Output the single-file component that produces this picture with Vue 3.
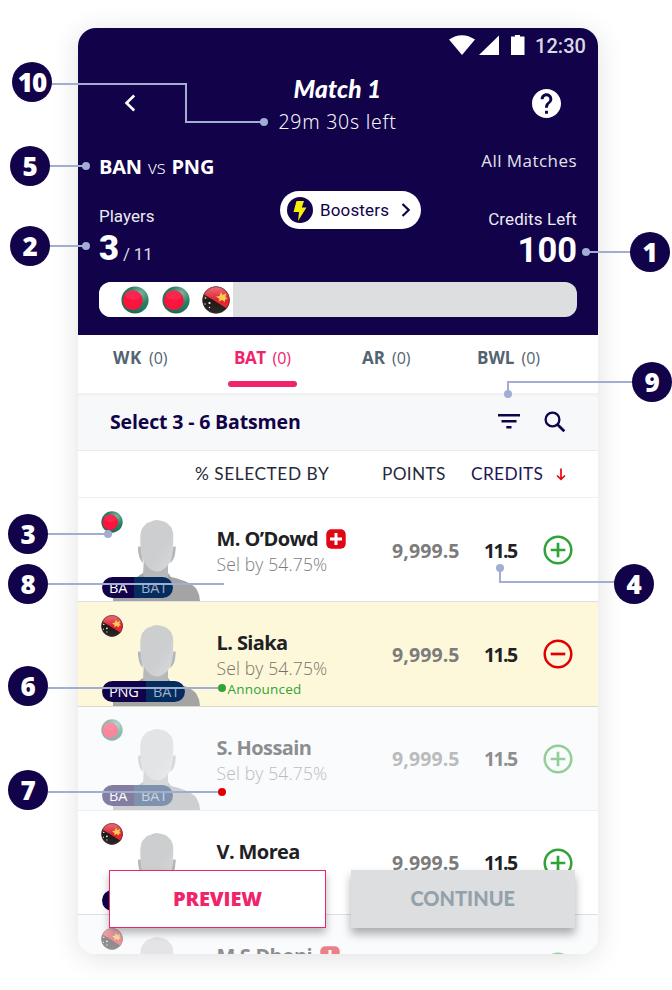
<script setup>
const tabs = [
  { key: 'wk', label: 'WK' },
  { key: 'bat', label: 'BAT', active: true },
  { key: 'ar', label: 'AR' },
  { key: 'bwl', label: 'BWL' },
]

// Rows that slide under the footer carry only the parts that stay visible.
const players = [
  { id: 'od', name: 'M. O’Dowd', team: 'BA', flag: 'ban', injured: true, action: 'plus', sel: true, tag: true, role: 'BAT' },
  { id: 'si', name: 'L. Siaka', team: 'PNG', flag: 'png', action: 'minus', selected: true, announced: true, sel: true, tag: true, role: 'BAT' },
  { id: 'ho', name: 'S. Hossain', team: 'BA', flag: 'ban', action: 'plus', faded: true, sel: true, tag: true, role: 'BAT' },
  { id: 'mo', name: 'V. Morea', team: '', flag: 'png', action: 'plus', tag: true, role: '', sel: false },
  { id: 'dh', name: 'M.S.Dhoni', team: '', flag: 'png', injured: true, action: 'plus', faded: true, last: true },
]

const badges = ['10', '5', '2', '3', '8', '6', '7', '1', '9', '4']
</script>

<template>
  <div class="page">
    <svg class="defs" width="0" height="0">
      <defs>
        <radialGradient id="green" cx=".7" cy=".25" r=".85">
          <stop offset="0" stop-color="#7db59f" />
          <stop offset=".45" stop-color="#2b7f63" />
          <stop offset="1" stop-color="#1f6650" />
        </radialGradient>
        <radialGradient id="red" cx=".5" cy=".5" r=".55">
          <stop offset="0" stop-color="#ff1440" />
          <stop offset="1" stop-color="#f6143c" />
        </radialGradient>
        <linearGradient id="gloss" x1="0" y1="0" x2="0" y2="1">
          <stop offset="0" stop-color="#fff" stop-opacity=".38" />
          <stop offset=".5" stop-color="#fff" stop-opacity=".03" />
          <stop offset="1" stop-color="#fff" stop-opacity=".1" />
        </linearGradient>
        <clipPath id="round"><circle cx="14" cy="14" r="13.6" /></clipPath>
        <linearGradient id="head" x1="0" y1="0" x2="1" y2="1">
          <stop offset=".6" stop-color="#cdcecf" />
          <stop offset="1" stop-color="#d9dadb" />
        </linearGradient>
        <symbol id="ban" viewBox="0 0 28 28">
          <circle cx="14" cy="14" r="13.6" fill="url(#green)" />
          <circle cx="11.8" cy="14.2" r="9.9" fill="url(#red)" />
          <ellipse cx="12" cy="9" rx="8" ry="5" fill="#fff" opacity=".08" />
        </symbol>
        <symbol id="png" viewBox="0 0 28 28">
          <g clip-path="url(#round)">
            <rect width="28" height="28" fill="#17110f" />
            <path d="M0 7V0H28V24.500Z" fill="#e01c2c" />
            <path d="M14 10.500l3.500-.5 1.500-4 1.500 3 3.500-1.500-.5 3.500 2 2-2.500.5v2.500l-3-2-3.500 1.500 1-2.500z" fill="#f6c63a" />
            <g fill="#fff">
              <circle cx="3.500" cy="12" r=".8" /><circle cx="7.500" cy="17" r="1.100" />
              <circle cx="3" cy="18" r=".7" /><circle cx="7.500" cy="21.500" r=".7" />
            </g>
            <rect width="28" height="28" fill="url(#gloss)" />
          </g>
          <circle cx="14" cy="14" r="13.2" fill="none" stroke="#4b3030" stroke-opacity=".5" />
        </symbol>
        <symbol id="person" viewBox="0 0 88 81">
          <path d="M0 81V66Q10 60 24 57L30 53H55L58 57Q80 62 84 70Q87 75 87 81Z" fill="#a4a4a5" />
          <path d="M31 36H55V58Q51 66 44 66T30 55Z" fill="#b6b8ba" />
          <path d="M28 27Q24.500 24.500 25 30Q26 40 30 43ZM60 27Q63.500 24.500 62.500 30Q62 40 57 43Z" fill="#b4b8bb" />
          <path d="M27.300 22Q26.500 9 32 5L34 3L37 2L40 .7L43 0L47 .5L51 1.500L54 3L57 6Q61 9 60.200 22L59.300 34Q58 44 51 49Q44 54 37 49Q30 43 28 34Z" fill="url(#head)" />
        </symbol>
      </defs>
    </svg>

    <main class="phone">
      <header class="header">
        <div class="status">
          <svg width="76" height="20" viewBox="0 0 76 20" fill="#fff">
            <path d="M0 4.500Q13-4 26 4.500L13 20Z" />
            <path d="M50 .5V20H30Z" />
            <path d="M62 1.500h4V0h5v1.500h4.500V20H62Z" />
          </svg>
          <span class="clock">12:30</span>
        </div>

        <div class="title-row">
          <svg class="back" width="12" height="18" viewBox="0 0 12 18">
            <path d="M10.200 1.500L2.500 9l7.700 7.500" fill="none" stroke="#fff" stroke-width="2.600" />
          </svg>
          <div class="titles">
            <h1>Match 1</h1>
            <p>29m 30s left</p>
          </div>
          <svg class="help" width="29" height="29" viewBox="2 2 20 20" fill="#fff">
            <path d="M12 2C6.480 2 2 6.480 2 12s4.480 10 10 10 10-4.480 10-10S17.520 2 12 2zm1 17h-2v-2h2v2zm2.070-7.750l-.9.920C13.450 12.900 13 13.500 13 15h-2v-.5c0-1.100.45-2.100 1.170-2.830l1.240-1.260c.37-.36.590-.86.590-1.410 0-1.100-.9-2-2-2s-2 .9-2 2H8c0-2.210 1.790-4 4-4s4 1.790 4 4c0 .88-.36 1.680-.93 2.250z" />
          </svg>
        </div>

        <div class="summary">
          <div class="left">
            <div class="versus"><b>BAN</b><span>vs</span><b>PNG</b></div>
            <div class="label players-label">Players</div>
            <div class="count"><b>3</b><span>/ 11</span></div>
          </div>
          <button class="boosters">
            <svg width="26" height="26" viewBox="0 0 26 26">
              <circle cx="13" cy="13" r="13" fill="#110249" />
              <path d="M9.500 4H17l-2.200 6.500H19.500L11 24l1-9H6.500Z" fill="#f6ee0b" />
            </svg>
            <span>Boosters</span>
            <svg width="10" height="14" viewBox="0 0 10 14">
              <path d="M1.500 1L7.700 7 1.500 13" fill="none" stroke="#110249" stroke-width="2.200" />
            </svg>
          </button>
          <div class="right">
            <div class="all">All Matches</div>
            <div class="label credit-label">Credits Left</div>
            <div class="hundred">100</div>
          </div>
        </div>

        <div class="progress">
          <div class="filled">
            <svg v-for="(f, i) in ['ban', 'ban', 'png']" :key="i" width="28" height="28"><use :href="'#' + f" /></svg>
          </div>
        </div>
      </header>

      <nav class="tabs">
        <div v-for="t in tabs" :key="t.key" class="tab" :class="[t.key, { active: t.active }]">
          <div class="tab-text"><b>{{ t.label }}</b><span>(0)</span></div>
          <div v-if="t.active" class="underline"></div>
        </div>
      </nav>

      <section class="toolbar">
        <h2>Select 3 - 6 Batsmen</h2>
        <svg width="22" height="15" viewBox="0 0 22 15" fill="#110249">
          <path d="M0 0h22v2.500H0zM3.500 6h15v2.500h-15zM8.300 12h5.200v2.500H8.300z" />
        </svg>
        <svg class="search" width="22" height="22" viewBox="0 0 22 22" fill="none" stroke="#110249">
          <circle cx="8.500" cy="8.500" r="6.900" stroke-width="2.300" />
          <path d="M13.200 13.200L20.300 20.300" stroke-width="2.800" />
        </svg>
      </section>

      <section class="columns">
        <span class="c-sel">% SELECTED BY</span>
        <span class="c-pts">POINTS</span>
        <span class="c-crd">CREDITS</span>
        <svg width="10" height="13" viewBox="0 0 10 13" fill="none" stroke="#e30613" stroke-width="1.700">
          <path d="M5 .5V11M1 7.500L5 11.300 9 7.500" />
        </svg>
      </section>

      <section class="list">
        <article v-for="p in players" :key="p.id" class="row" :class="[p.id, { selected: p.selected, faded: p.faded }]">
          <div class="photo">
            <svg class="flag" width="22" height="22"><use :href="'#' + p.flag" /></svg>
            <svg class="person" width="88" height="81"><use href="#person" /></svg>
            <div v-if="p.tag" class="tag" :class="p.team"><span class="team">{{ p.team }}</span><span class="role">{{ p.role }}</span></div>
          </div>
          <div class="info">
            <div class="name">
              <span>{{ p.name }}</span>
              <svg v-if="p.injured" width="20" height="20" viewBox="0 0 20 20">
                <rect x=".3" y=".3" width="19.400" height="19.400" rx="5" fill="#e10613" />
                <path d="M10 4v12M4 10h12" stroke="#fff" stroke-width="3" />
              </svg>
            </div>
            <div v-if="p.sel" class="sel">Sel by 54.75%</div>
            <div v-if="p.announced" class="announced">Announced</div>
          </div>
          <div class="points"><template v-if="!p.last">9,999.5</template></div>
          <div class="credits"><template v-if="!p.last">11.5</template></div>
          <svg class="action" width="30" height="30" viewBox="0 0 30 30" fill="none" :stroke="p.action === 'plus' ? '#2fa336' : '#e10000'">
            <circle cx="15" cy="15" r="13.300" stroke-width="2.500" />
            <path :d="p.action === 'plus' ? 'M15 7.700v14.600M7.700 15h14.600' : 'M7.700 15h14.600'" stroke-width="2.700" />
          </svg>
        </article>
      </section>

      <footer class="buttons">
        <button class="preview"><span>PREVIEW</span></button>
        <button class="continue"><span>CONTINUE</span></button>
      </footer>
    </main>

    <svg class="wires" width="672" height="990" viewBox="0 0 672 990" fill="none" stroke="#a2aed1" stroke-width="2">
      <path d="M50 84H186V122H264M48 166H86M48 246H86M46 534H108M46 584H224M46 688H222M46 792H222M632 252H586M634 382H508V394M616 582H500V568" />
      <g fill="#a2aed1" stroke="none">
        <circle cx="264" cy="122" r="4" /><circle cx="86" cy="166" r="4" /><circle cx="86" cy="246" r="4" />
        <circle cx="108" cy="534" r="4" /><circle cx="586" cy="252" r="4" /><circle cx="508" cy="394" r="4" />
        <circle cx="500" cy="568" r="4" />
        <circle cx="222" cy="688" r="4" fill="#2fa336" /><circle cx="222" cy="792" r="4" fill="#e10000" />
      </g>
    </svg>
    <div v-for="n in badges" :key="n" class="badge" :class="'n' + n"><span>{{ n }}</span></div>
  </div>
</template>

<style>
body { background: #fff; overflow: hidden; }
</style>

<style scoped>
.page { position: relative; width: 672px; height: 990px; box-sizing: border-box; padding: 28px 74px 0 78px; overflow: hidden; background: #fff; font-family: "Open Sans", "Noto Sans", sans-serif; white-space: nowrap; }
svg { display: block; flex: none; }
.defs { position: absolute; }
h1, h2, p { margin: 0; }
button { border: 0; padding: 0; font: inherit; }
.phone { position: relative; width: 520px; height: 926px; border-radius: 18px; overflow: hidden; background: #fff; }
.page::before { content: ""; position: absolute; left: 78px; top: 28px; width: 520px; height: 926px; border-radius: 18px; box-shadow: 0 4px 28px rgba(0, 0, 0, .12); }

.header { background: #110249; color: #fff; height: 306.5px; box-sizing: border-box; padding: 0 21px; }
.status { height: 34px; display: flex; align-items: center; justify-content: flex-end; margin-right: -10px; gap: 10px; }
.clock { font: 500 20px/34px Roboto, sans-serif; color: #dbd9e4; letter-spacing: .05px; width: 52px; padding-top: 1px; }
.title-row { display: flex; justify-content: space-between; height: 72px; padding: 12px 16px 0 25px; box-sizing: border-box; }
.back { margin-top: 20px; }
.help { margin-top: 15px; }
.titles { text-align: center; margin-left: 7px; }
h1 { font: italic 900 24.5px/30px Lato, sans-serif; letter-spacing: .15px; }
.titles p { font: 300 19.500px/26px "Noto Sans", sans-serif; letter-spacing: .75px; margin-top: 5px; color: #f6f5fa; }
.summary { display: flex; justify-content: space-between; height: 148px; }
.left { width: 181px; padding-top: 20px; }
.versus { display: flex; font-size: 20px; line-height: 26px; gap: 6px; }
.versus b { letter-spacing: -.2px; }
.versus span { font-weight: 300; font-size: 19px; }
.label { font: 400 17px/22px Roboto, sans-serif; color: #eceaf2; }
.players-label { margin-top: 25px; }
.count { font: 700 34.5px/36px Roboto, sans-serif; margin-top: 3px; display: flex; align-items: baseline; gap: 4px; }
.count span { font-size: 17px; font-weight: 400; color: #dddbe6; letter-spacing: -.2px; }
.boosters { margin-top: 57px; height: 38px; width: 141px; border-radius: 19px; background: #fff; display: flex; align-items: center; padding-left: 7px; box-sizing: border-box; color: #110249; font: 400 17px/22px Roboto, sans-serif; }
.boosters span { width: 69px; margin: 0 12px 0 7px; text-align: left; letter-spacing: .15px; }
.right { width: 156px; padding-top: 16px; text-align: right; }
.all { font-size: 17px; line-height: 22px; font-weight: 400; letter-spacing: .45px; color: #e4e2ec; }
.credit-label { margin-top: 36px; letter-spacing: .1px; }
.hundred { font: 700 34.5px/36px Roboto, sans-serif; margin-top: 2px; }
.progress { height: 35px; border-radius: 12px; background: #dddee0; overflow: hidden; }
.filled { width: 134px; height: 35px; box-sizing: border-box; background: #fff; display: flex; align-items: center; gap: 12.5px; padding-left: 22px; }

.tabs { display: grid; grid-template-columns: 121px 128px 115px 1fr; padding: 11.500px 0 0 35px; height: 58.500px; box-sizing: border-box; color: #526471; }
.tab-text { display: flex; gap: 7px; font-size: 17px; line-height: 24px; }
.tab-text span { font-weight: 400; font-size: 16px; }
.bat .tab-text b { letter-spacing: -.5px; }
.wk .tab-text b { letter-spacing: .6px; }
.active { color: #f0246b; }
.underline { width: 69px; height: 6px; border-radius: 3px; background: #f0246b; margin: 10.500px 0 0 -6px; }
.toolbar { height: 58px; box-sizing: border-box; background: #f7f8fa; border-bottom: 1px solid #e9ebef; box-shadow: inset 0 3px 4px -2px rgba(0,0,0,.06); display: flex; align-items: center; padding: 0 32px 0 32px; }
h2 { font-size: 19.5px; line-height: 26px; font-weight: 700; color: #110249; flex: 1; letter-spacing: -.15px; }
.search { margin-left: 24px; }
.columns { height: 47px; box-sizing: border-box; border-bottom: 1px solid #edeff1; display: flex; align-items: center; padding-left: 117px; font: 400 17.3px/22px Lato, sans-serif; color: #262a3a; }
.c-sel { width: 187px; letter-spacing: .55px; }
.c-pts { width: 89px; letter-spacing: .3px; }
.c-crd { width: 85px; letter-spacing: .35px; color: #221558; }

.row { position: relative; height: 104.25px; box-sizing: border-box; border-bottom: 1.5px solid #dedfe2; display: grid; grid-template-columns: 138.500px 175.500px 92px 59px auto; align-items: center; justify-content: start; }
.selected { background: #fef8db; border-bottom-color: #ddd9c3; }
.faded { background: #fafbfd; border-bottom-color: #eceef1; }
.faded > * { opacity: .5; }
.photo { align-self: stretch; position: relative; }
.flag { position: absolute; left: 23px; top: 12.500px; }
.person { position: absolute; left: 35px; bottom: 0; }
.tag { position: absolute; left: 24px; bottom: 3.500px; height: 21px; border-radius: 11px; overflow: hidden; display: flex; font-size: 14.5px; line-height: 22px; color: #fff; }
.team { background: #110249; padding-left: 7px; width: 25px; }
.role { background: #042c5f; color: #9fb0c4; width: 32px; padding-left: 7px; }
.PNG .team { width: 37px; letter-spacing: -.2px; }
.info { align-self: start; padding-top: 28px; }
.name { display: flex; align-items: center; gap: 8px; font-size: 20px; line-height: 26px; font-weight: 700; color: #202124; letter-spacing: -.6px; }
.sel { font-size: 17.500px; line-height: 24px; color: #7d7d7d; font-weight: 300; letter-spacing: .15px; }
.selected .sel { color: #77756a; }
.announced { font-size: 13.500px; line-height: 18px; color: #2fa336; padding-left: 11px; letter-spacing: .2px; }
.points { font-size: 19.500px; font-weight: 700; color: #7c7c7c; line-height: 26px; padding-top: 2px; letter-spacing: .1px; }
.credits { font-size: 19.500px; font-weight: 700; color: #202124; line-height: 26px; padding-top: 2px; letter-spacing: -1.6px; }
.action { margin-top: 1px; }

.buttons { position: absolute; left: 31px; top: 842px; display: flex; gap: 24.500px; font-weight: 700; font-size: 20px; }
.preview { width: 217px; height: 58px; box-sizing: border-box; background: #fff; border: 1.5px solid #f0246b; color: #f0246b; font-weight: 800; letter-spacing: -.1px; box-shadow: 0 5px 8px rgba(0,0,0,.28); }
.preview span, .continue span { position: relative; top: -1px; }
.continue { width: 224.500px; height: 58px; background: #dddee0; color: #93a1aa; box-shadow: 0 6px 9px rgba(0,0,0,.32); font-family: Lato, sans-serif; font-weight: 900; }

.wires { position: absolute; left: 0; top: 0; }
.badge { position: absolute; width: 40px; height: 40px; border-radius: 50%; background: #110249; color: #fff; display: flex; align-items: center; justify-content: center; font-size: 26px; line-height: 40px; font-weight: 800; }
.n10 { left: 12px; top: 62px; letter-spacing: -1px; }
.n5 { left: 10px; top: 146px; }
.n2 { left: 10px; top: 226px; }
.n3 { left: 8px; top: 514px; }
.n8 { left: 8px; top: 564px; }
.n6 { left: 8px; top: 666px; }
.n7 { left: 8px; top: 770px; }
.n1 { left: 630px; top: 232px; }
.n9 { left: 632px; top: 362px; }
.n4 { left: 614px; top: 564px; }
</style>
